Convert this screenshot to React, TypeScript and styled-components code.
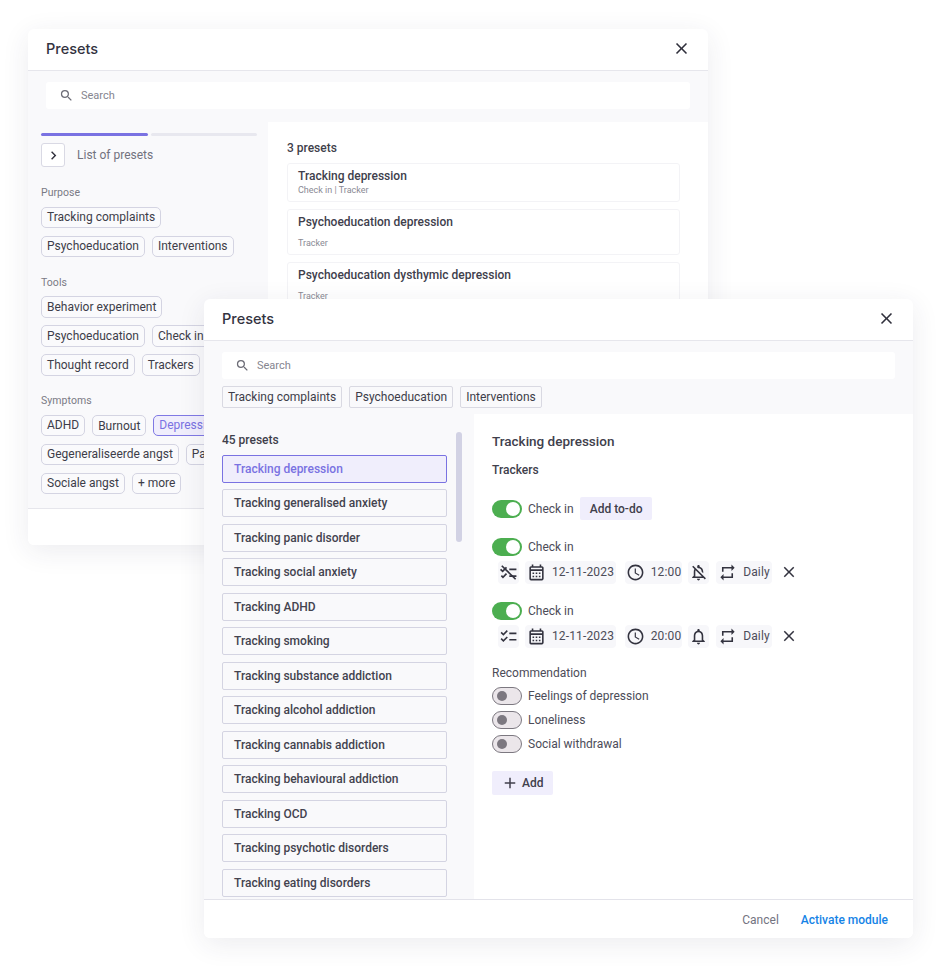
import React from "react";
import styled, { createGlobalStyle } from "styled-components";
import {
  MdSearch, MdClose, MdChevronRight, MdOutlineCalendarMonth, MdOutlineSchedule,
  MdOutlineNotifications, MdOutlineNotificationsOff, MdRepeat, MdChecklist, MdAdd,
} from "react-icons/md";

const Global = createGlobalStyle`
  html, body { margin: 0; padding: 0; background: #fff; }
  body { font-family: Roboto, "Liberation Sans", sans-serif; color: #2f2f3b; width: 938px; height: 966px; overflow: hidden; }
  * { box-sizing: border-box; }
`;

const Desk = styled.div`position: relative; width: 938px; height: 966px; background: #fff;`;

const Win = styled.section<{ $x: number; $y: number; $w: number; $h: number }>`
  position: absolute;
  left: ${p => p.$x}px; top: ${p => p.$y}px; width: ${p => p.$w}px; height: ${p => p.$h}px;
  display: flex; flex-direction: column;
  background: #fff; border-radius: 6px; overflow: hidden;
  box-shadow: 0 6px 28px rgba(40, 40, 80, 0.09);
`;
const Header = styled.header`
  flex: none; height: 42px; padding: 0 18px;
  display: flex; align-items: center; justify-content: space-between;
  border-bottom: 1.5px solid #e6e6ec;
`;
const Title = styled.h2`margin: 0; font-family: Inter, sans-serif; font-size: 14.5px; font-weight: 500; color: #33333f; position: relative; top: -1px;`;
const CloseBtn = styled.span`display: flex; color: #2f2f3b; margin-right: -1px; font-size: 19px; position: relative; top: -1px;`;

const Body = styled.div`flex: 1; min-height: 0; display: flex; flex-direction: column; background: #f9f9fb;`;
const SearchWrap = styled.div`flex: none; padding: 11px 18px 0;`;
const SearchBox = styled.div`
  height: 27px; background: #fff; border-radius: 3px; padding: 0 13px;
  display: flex; align-items: center; gap: 7px; font-size: 11px; color: #85858f;
  svg { font-size: 15px; color: #6c6c76; }
`;
const Columns = styled.div`flex: 1; min-height: 0; display: flex; margin-top: 13px;`;

const LeftCol = styled.div`flex: none; width: 240px; padding: 11px 11px 0 13px;`;
const Steps = styled.div`display: flex; gap: 3px;`;
const Step = styled.div<{ $on?: boolean }>`
  flex: 1; height: 3px; border-radius: 2px; background: ${p => (p.$on ? "#7a72e2" : "#e8e8ef")};
`;
const StepRow = styled.div`display: flex; align-items: center; gap: 12px; margin-top: 6px; font-size: 12px; line-height: 26px; color: #72727e;`;
const StepBtn = styled.span`
  width: 24px; height: 24px; background: #fff; border: 1px solid #d9d9e4; border-radius: 3px;
  display: flex; align-items: center; justify-content: center; color: #33333f; font-size: 17px;
`;
const Label = styled.div`font-size: 10.5px; letter-spacing: 0.05px; color: #797985; margin: 18.5px 0 7.5px; line-height: 13px;`;
const FirstLabel = styled(Label)`margin-top: 18px;`;
const Chips = styled.div`display: flex; flex-wrap: wrap; gap: 7.5px 7px; width: 216px;`;
const Chip = styled.span<{ $on?: boolean; $low?: boolean }>`
  height: 21.5px; padding: ${p => (p.$low ? "1px" : "0")} 5px 0; display: inline-flex; align-items: center;
  font-size: 12px; white-space: nowrap; border-radius: 5px;
  color: ${p => (p.$on ? "#7a72e2" : "#3d3d49")};
  background: ${p => (p.$on ? "#f0eefc" : "#fafafc")};
  border: 1.5px solid ${p => (p.$on ? "#8079e4" : "#d4d4e2")};
`;

const RightCol = styled.div`flex: 1; background: #fff; padding: 19px 28px 0 19px; min-width: 0;`;
const Count = styled.div`font-size: 12px; font-weight: 500; color: #3f3f4b; line-height: 14px;`;
const Cards = styled.div`display: flex; flex-direction: column; gap: 7px; margin-top: 8px;`;
const Card = styled.div<{ $tall?: boolean }>`
  height: ${p => (p.$tall ? 46 : 39)}px; padding: 5px 10px 0; border: 1px solid #f3f3f6; border-radius: 3px;
  display: flex; flex-direction: column; justify-content: ${p => (p.$tall ? "space-between" : "flex-start")};
  padding-bottom: ${p => (p.$tall ? 5 : 0)}px;
`;
const CardTitle = styled.div`font-size: 12px; font-weight: 500; color: #40404c; line-height: 15px;`;
const CardSub = styled.div`font-size: 9px; color: #8a8a94; line-height: 11px; margin-top: 1px;`;
const Foot = styled.footer`flex: none; height: 37px; border-top: 1.5px solid #e6e6ec; background: #fff;`;

const FilterRow = styled.div`flex: none; display: flex; gap: 7px; padding: 6.5px 18px 0;`;
const SquareChip = styled(Chip)`border-radius: 2px; height: 22px; padding: 0 5px; background: #f9f9fb; border-color: #d9d9e2;`;

const Split = styled.div`flex: 1; min-height: 0; display: flex; margin-top: 6px;`;
const ListCol = styled.div`flex: none; width: 270px; padding: 19px 0 0 18px; position: relative; overflow: hidden;`;
const List = styled.div`display: flex; flex-direction: column; gap: 6.5px; width: 225px; margin-top: 8px;`;
const Item = styled.div<{ $on?: boolean }>`
  flex: none; height: 28px; padding: 0 11px; display: flex; align-items: center;
  font-size: 12px; font-weight: 500; white-space: nowrap; border-radius: 2px;
  color: ${p => (p.$on ? "#7a72e2" : "#43434f")};
  background: ${p => (p.$on ? "#f0eefc" : "#f9f9fb")};
  border: 1.5px solid ${p => (p.$on ? "#7a72e2" : "#d4d4e2")};
`;
const Scroll = styled.div`
  position: absolute; left: 252px; top: 18px; width: 6px; height: 110px; border-radius: 3px; background: #d2d2e4;
`;
const Detail = styled.div`flex: 1; background: #fff; padding: 20px 18px 0;`;
const DetailTitle = styled.h3`margin: 0; font-size: 13.5px; font-weight: 500; line-height: 15px; color: #40404c;`;
const SubTitle = styled.div`font-size: 12px; font-weight: 500; line-height: 14px; margin-top: 14px; color: #40404c;`;
const ToggleRow = styled.div`display: flex; align-items: center; gap: 6px; font-size: 12px; color: #4c4c58; line-height: 18px;`;
const FirstRow = styled(ToggleRow)`margin-top: 20px; height: 24px;`;
const NextRow = styled(ToggleRow)`margin-top: 17px;`;
const Third = styled(ToggleRow)`margin-top: 18px;`;
const Track = styled.span<{ $on?: boolean }>`
  flex: none; width: 30px; height: 18px; border-radius: 9px; padding: 2px; display: flex; align-items: center;
  justify-content: ${p => (p.$on ? "flex-end" : "flex-start")};
  background: ${p => (p.$on ? "#4cae50" : "#ebe6ea")};
  border: ${p => (p.$on ? "none" : "1px solid #7c7880")};
  &::after {
    content: ""; display: block; border-radius: 50%;
    width: ${p => (p.$on ? 14 : 10)}px; height: ${p => (p.$on ? 14 : 10)}px;
    background: ${p => (p.$on ? "#fff" : "#7c7880")};
    margin-left: ${p => (p.$on ? 0 : 2)}px;
  }
`;
const SoftBtn = styled.span`
  height: 23px; display: inline-flex; align-items: center; gap: 6px; padding: 0 10px;
  background: #f0eefc; border-radius: 2px; font-size: 12px; font-weight: 500; color: #40404c;
  svg { font-size: 18px; }
`;
const AddBtn = styled(SoftBtn)`margin-top: 18px; width: 61px; height: 24px; padding: 0 0 0 9px; gap: 3px;`;
const Pills = styled.div`display: flex; align-items: center; margin: 5px 0 0 6px; height: 23px;`;
const Pill = styled.span<{ $w: number; $ml: number }>`
  flex: none; height: 23px; width: ${p => p.$w}px; margin-left: ${p => p.$ml}px; border-radius: 4px; background: #f7f7fa;
  display: flex; align-items: center; justify-content: center; gap: 6px;
  font-size: 12px; letter-spacing: 0.15px; color: #4c4c58;
  svg { flex: none; font-size: 19px; color: #33333f; }
`;
const Remove = styled.span`display: flex; margin-left: 8px; font-size: 18px; color: #33333f;`;
const RecoTitle = styled.div`font-size: 12px; color: #4c4c58; line-height: 14px; margin-top: 18.5px;`;
const RecoList = styled.div`display: flex; flex-direction: column; gap: 6px; margin-top: 7px;`;
const WinFoot = styled.footer`
  flex: none; height: 39px; border-top: 1.5px solid #e3e3ea; background: #fff; padding: 1px 25px 0 0;
  display: flex; align-items: center; justify-content: flex-end; gap: 22px;
  font-size: 12px;
`;
const Cancel = styled.span`color: #73737f;`;
const Activate = styled.span`color: #1583e6; font-weight: 500;`;

const CrossedList = () => (
  <svg width="19" height="19" viewBox="0 0 24 24" fill="none" stroke="currentColor" strokeWidth="2.1">
    <path d="M2 8l2.6 2.6L9.5 5.5M3 16l2 2 4.5-4.5M13 8h9M13 16.5h9" />
    <path d="M3.5 3.5L21 20.5" />
  </svg>
);

const purpose = ["Tracking complaints", "Psychoeducation", "Interventions"];
const tools = ["Behavior experiment", "Psychoeducation", "Check in", "Thought record", "Trackers"];
const items = [
  "Tracking depression", "Tracking generalised anxiety", "Tracking panic disorder", "Tracking social anxiety",
  "Tracking ADHD", "Tracking smoking", "Tracking substance addiction", "Tracking alcohol addiction",
  "Tracking cannabis addiction", "Tracking behavioural addiction", "Tracking OCD", "Tracking psychotic disorders",
  "Tracking eating disorders",
];

const Schedule = ({ time, off, icon }: { time: string; off?: boolean; icon: React.ReactNode }) => (
  <Pills>
    <Pill $w={21} $ml={0}>{icon}</Pill>
    <Pill $w={91} $ml={6}><MdOutlineCalendarMonth />12-11-2023</Pill>
    <Pill $w={57} $ml={9}><MdOutlineSchedule />{time}</Pill>
    <Pill $w={21} $ml={6}>{off ? <MdOutlineNotificationsOff /> : <MdOutlineNotifications />}</Pill>
    <Pill $w={56} $ml={7}><MdRepeat />Daily</Pill>
    <Remove><MdClose /></Remove>
  </Pills>
);

export default function App() {
  return (
    <Desk>
      <Global />
      <Win $x={28} $y={29} $w={680} $h={516}>
        <Header><Title>Presets</Title><CloseBtn><MdClose /></CloseBtn></Header>
        <Body>
          <SearchWrap><SearchBox><MdSearch />Search</SearchBox></SearchWrap>
          <Columns>
            <LeftCol>
              <Steps><Step $on /><Step /></Steps>
              <StepRow><StepBtn><MdChevronRight /></StepBtn>List of presets</StepRow>
              <FirstLabel>Purpose</FirstLabel>
              <Chips>{purpose.map(t => <Chip key={t}>{t}</Chip>)}</Chips>
              <Label>Tools</Label>
              <Chips>{tools.map(t => <Chip key={t}>{t}</Chip>)}</Chips>
              <Label>Symptoms</Label>
              <Chips>
                <Chip>ADHD</Chip>
                <Chip $low>Burnout</Chip>
                <Chip $on>Depressie</Chip>
                <Chip>Gegeneraliseerde angst</Chip>
                <Chip>Paniek</Chip>
                <Chip>Sociale angst</Chip>
                <Chip>+ more</Chip>
              </Chips>
            </LeftCol>
            <RightCol>
              <Count>3 presets</Count>
              <Cards>
                <Card><CardTitle>Tracking depression</CardTitle><CardSub>Check in | Tracker</CardSub></Card>
                <Card $tall><CardTitle>Psychoeducation depression</CardTitle><CardSub>Tracker</CardSub></Card>
                <Card $tall><CardTitle>Psychoeducation dysthymic depression</CardTitle><CardSub>Tracker</CardSub></Card>
              </Cards>
            </RightCol>
          </Columns>
        </Body>
        <Foot />
      </Win>

      <Win $x={204} $y={299} $w={709} $h={639}>
        <Header><Title>Presets</Title><CloseBtn><MdClose /></CloseBtn></Header>
        <Body>
          <SearchWrap><SearchBox><MdSearch />Search</SearchBox></SearchWrap>
          <FilterRow>{purpose.map(t => <SquareChip key={t}>{t}</SquareChip>)}</FilterRow>
          <Split>
            <ListCol>
              <Count>45 presets</Count>
              <Scroll />
              <List>{items.map((t, i) => <Item key={t} $on={i === 0}>{t}</Item>)}</List>
            </ListCol>
            <Detail>
              <DetailTitle>Tracking depression</DetailTitle>
              <SubTitle>Trackers</SubTitle>
              <FirstRow><Track $on />Check in<SoftBtn>Add to-do</SoftBtn></FirstRow>
              <NextRow><Track $on />Check in</NextRow>
              <Schedule time="12:00" off icon={<CrossedList />} />
              <Third><Track $on />Check in</Third>
              <Schedule time="20:00" icon={<MdChecklist />} />
              <RecoTitle>Recommendation</RecoTitle>
              <RecoList>
                <ToggleRow><Track />Feelings of depression</ToggleRow>
                <ToggleRow><Track />Loneliness</ToggleRow>
                <ToggleRow><Track />Social withdrawal</ToggleRow>
              </RecoList>
              <AddBtn><MdAdd />Add</AddBtn>
            </Detail>
          </Split>
        </Body>
        <WinFoot><Cancel>Cancel</Cancel><Activate>Activate module</Activate></WinFoot>
      </Win>
    </Desk>
  );
}
